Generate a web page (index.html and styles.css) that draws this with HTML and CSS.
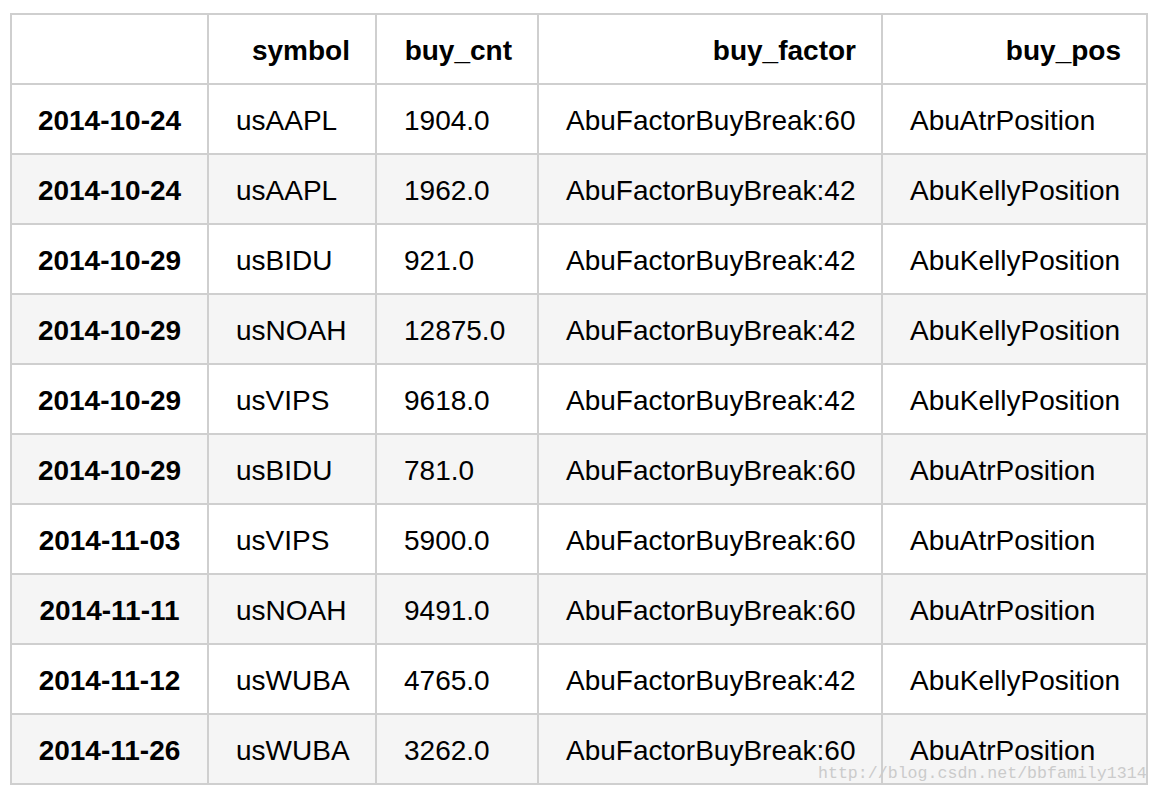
FILE: index.html
```html
<!DOCTYPE html>
<html>
<head>
<meta charset="utf-8">
<link rel="stylesheet" href="styles.css">
</head>
<body>
<div class="wrap">
<table class="df">
  <colgroup>
    <col class="c1"><col class="c2"><col class="c3"><col class="c4"><col class="c5">
  </colgroup>
  <thead>
    <tr><th></th><th>symbol</th><th>buy_cnt</th><th>buy_factor</th><th>buy_pos</th></tr>
  </thead>
  <tbody>
    <tr><th>2014-10-24</th><td>usAAPL</td><td>1904.0</td><td>AbuFactorBuyBreak:60</td><td>AbuAtrPosition</td></tr>
    <tr><th>2014-10-24</th><td>usAAPL</td><td>1962.0</td><td>AbuFactorBuyBreak:42</td><td>AbuKellyPosition</td></tr>
    <tr><th>2014-10-29</th><td>usBIDU</td><td>921.0</td><td>AbuFactorBuyBreak:42</td><td>AbuKellyPosition</td></tr>
    <tr><th>2014-10-29</th><td>usNOAH</td><td>12875.0</td><td>AbuFactorBuyBreak:42</td><td>AbuKellyPosition</td></tr>
    <tr><th>2014-10-29</th><td>usVIPS</td><td>9618.0</td><td>AbuFactorBuyBreak:42</td><td>AbuKellyPosition</td></tr>
    <tr><th>2014-10-29</th><td>usBIDU</td><td>781.0</td><td>AbuFactorBuyBreak:60</td><td>AbuAtrPosition</td></tr>
    <tr><th>2014-11-03</th><td>usVIPS</td><td>5900.0</td><td>AbuFactorBuyBreak:60</td><td>AbuAtrPosition</td></tr>
    <tr><th>2014-11-11</th><td>usNOAH</td><td>9491.0</td><td>AbuFactorBuyBreak:60</td><td>AbuAtrPosition</td></tr>
    <tr><th>2014-11-12</th><td>usWUBA</td><td>4765.0</td><td>AbuFactorBuyBreak:42</td><td>AbuKellyPosition</td></tr>
    <tr><th>2014-11-26</th><td>usWUBA</td><td>3262.0</td><td>AbuFactorBuyBreak:60</td><td>AbuAtrPosition</td></tr>
  </tbody>
</table>
<div class="watermark">http://blog.csdn.net/bbfamily1314</div>
</div>
</body>
</html>
```
FILE: styles.css
```css
html, body {
  margin: 0;
  padding: 0;
  background: #ffffff;
}
body {
  font-family: "Liberation Sans", Arial, Helvetica, sans-serif;
  color: #000;
}
.wrap {
  position: relative;
  width: 1138px;
  margin: 13px 0 0 10px;
}
.df {
  border-collapse: separate;
  border-spacing: 0;
  table-layout: fixed;
  width: 1138px;
  border-left: 2px solid #cfcfcf;
  border-top: 2px solid #cfcfcf;
  font-size: 28px;
}
.c1 { width: 197px; }
.c2 { width: 168px; }
.c3 { width: 162px; }
.c4 { width: 344px; }
.c5 { width: 265px; }
.df th, .df td {
  box-sizing: border-box;
  height: 70px;
  padding: 4px 25px 0 25px;
  border-right: 2px solid #cfcfcf;
  border-bottom: 2px solid #cfcfcf;
  vertical-align: middle;
  white-space: nowrap;
  line-height: 1;
}
.df thead th {
  text-align: right;
  font-weight: bold;
  background: #fff;
}
.df tbody th {
  text-align: center;
  font-weight: bold;
}
.df tbody td {
  text-align: left;
  font-weight: normal;
  padding-left: 27px;
}
.df tbody tr:nth-child(odd) { background: #ffffff; }
.df tbody tr:nth-child(even) { background: #f5f5f5; }
.watermark {
  position: absolute;
  left: 808px;
  top: 751px;
  font-family: "Liberation Mono", "DejaVu Sans Mono", monospace;
  font-size: 16.6px;
  color: #cbcbcb;
  white-space: nowrap;
  line-height: 20px;
}
```
